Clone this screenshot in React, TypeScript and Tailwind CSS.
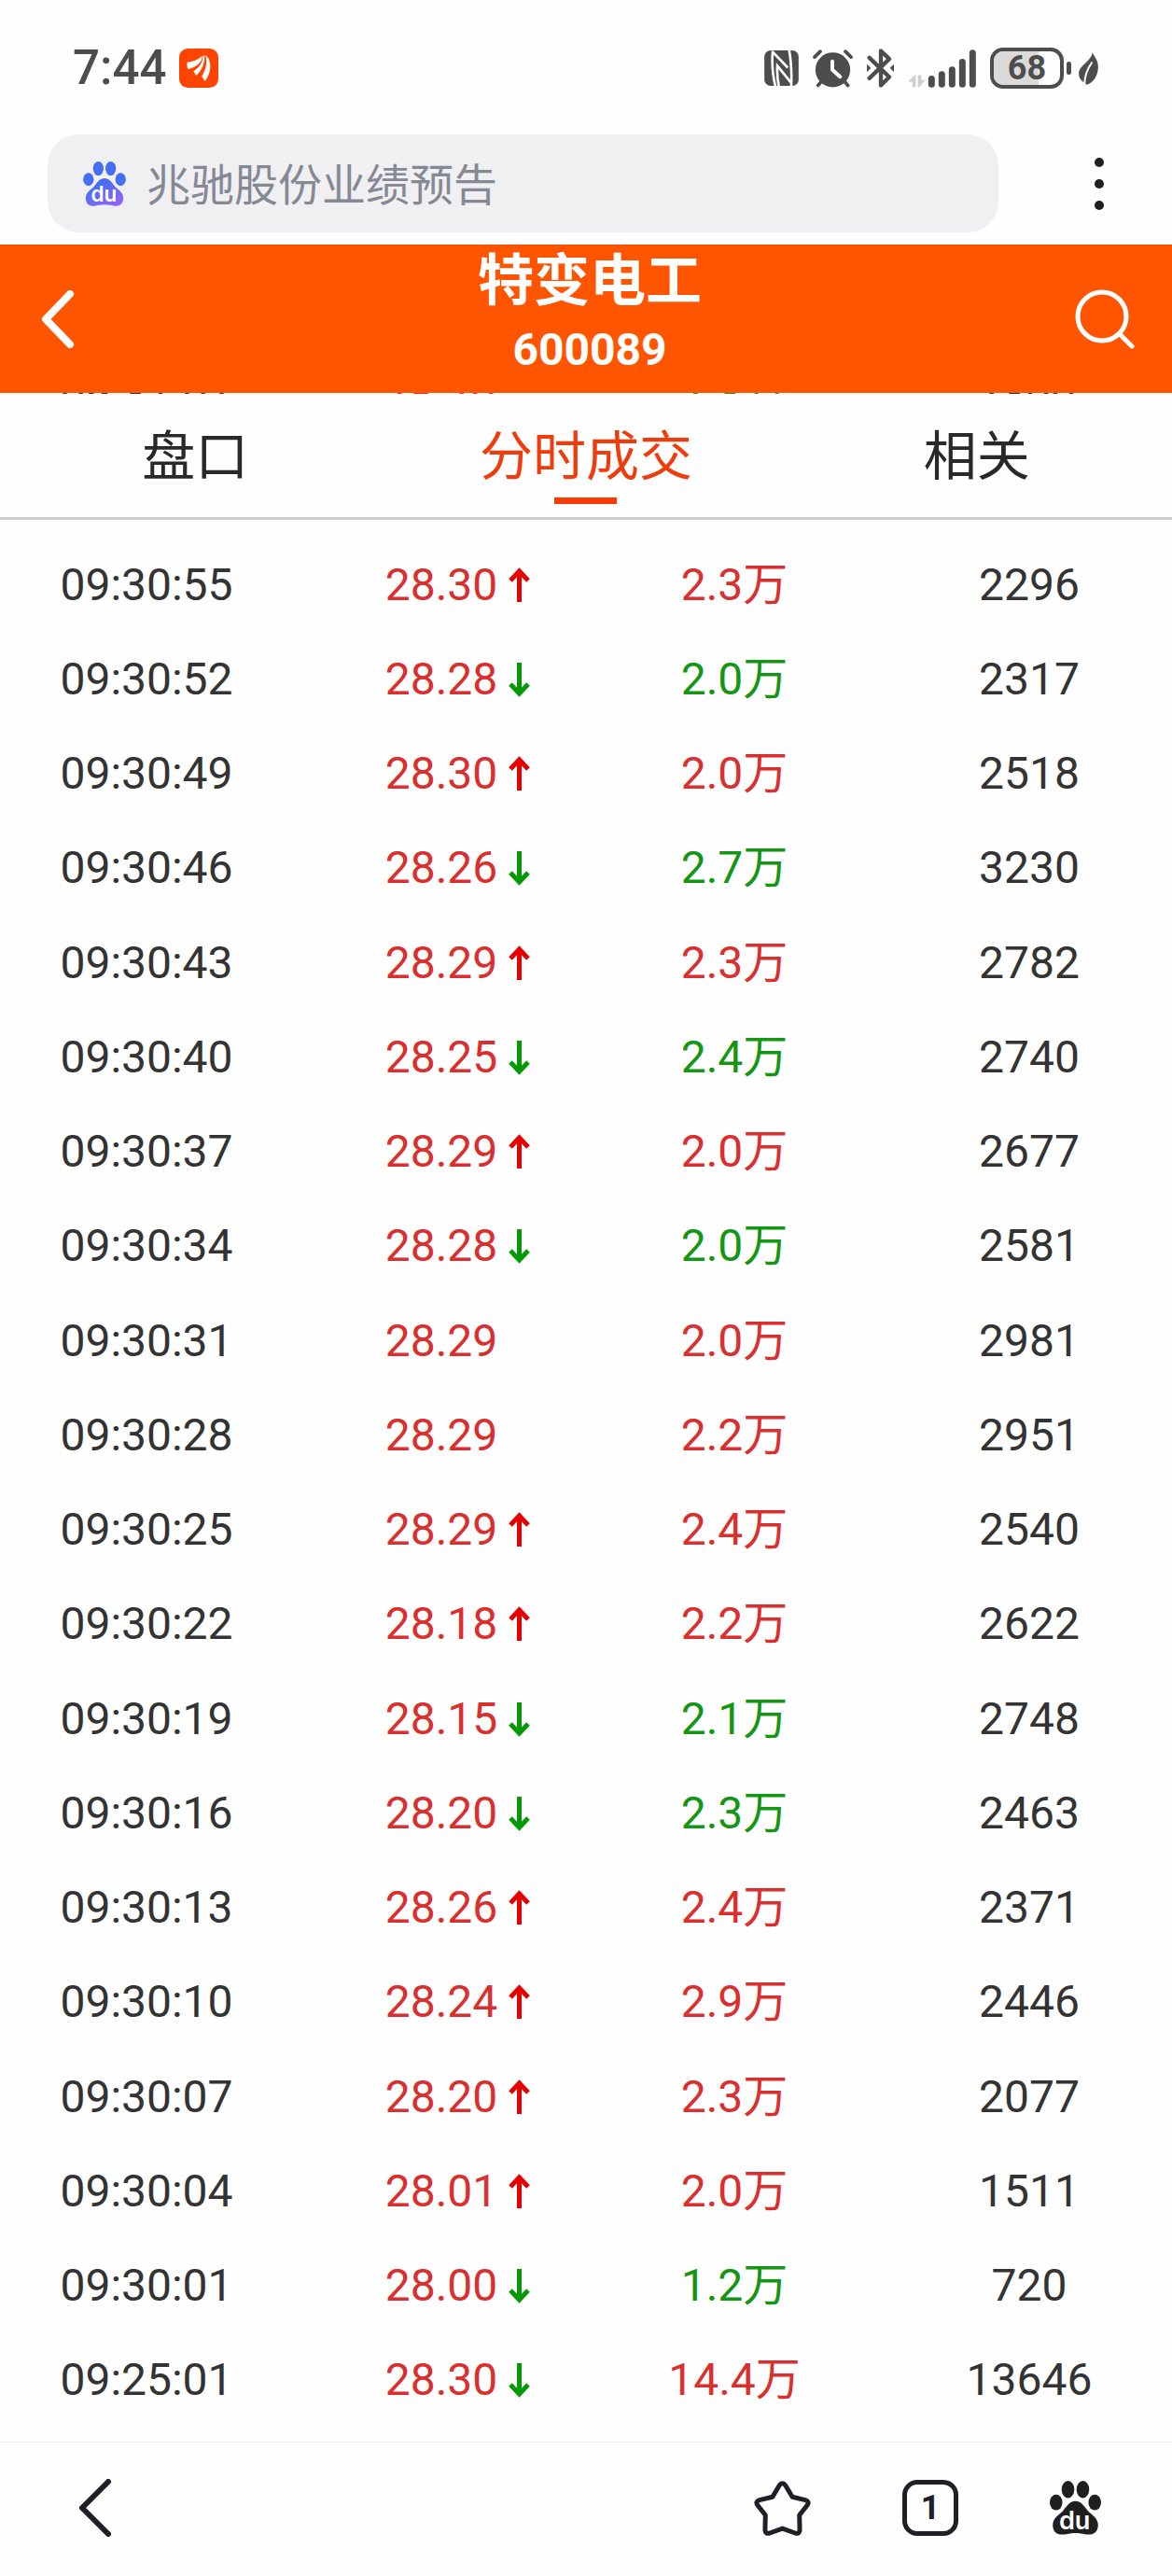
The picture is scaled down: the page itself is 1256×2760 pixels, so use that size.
import { useId, useState } from 'react'
import clsx from 'clsx'

type Trade = {
  time: string
  price: string
  move?: 'up' | 'down'
  volume: string
  side: 'buy' | 'sell'
  count: number
}

const trades: Trade[] = [
  { time: '09:30:55', price: '28.30', move: 'up', volume: '2.3万', side: 'buy', count: 2296 },
  { time: '09:30:52', price: '28.28', move: 'down', volume: '2.0万', side: 'sell', count: 2317 },
  { time: '09:30:49', price: '28.30', move: 'up', volume: '2.0万', side: 'buy', count: 2518 },
  { time: '09:30:46', price: '28.26', move: 'down', volume: '2.7万', side: 'sell', count: 3230 },
  { time: '09:30:43', price: '28.29', move: 'up', volume: '2.3万', side: 'buy', count: 2782 },
  { time: '09:30:40', price: '28.25', move: 'down', volume: '2.4万', side: 'sell', count: 2740 },
  { time: '09:30:37', price: '28.29', move: 'up', volume: '2.0万', side: 'buy', count: 2677 },
  { time: '09:30:34', price: '28.28', move: 'down', volume: '2.0万', side: 'sell', count: 2581 },
  { time: '09:30:31', price: '28.29', volume: '2.0万', side: 'buy', count: 2981 },
  { time: '09:30:28', price: '28.29', volume: '2.2万', side: 'buy', count: 2951 },
  { time: '09:30:25', price: '28.29', move: 'up', volume: '2.4万', side: 'buy', count: 2540 },
  { time: '09:30:22', price: '28.18', move: 'up', volume: '2.2万', side: 'buy', count: 2622 },
  { time: '09:30:19', price: '28.15', move: 'down', volume: '2.1万', side: 'sell', count: 2748 },
  { time: '09:30:16', price: '28.20', move: 'down', volume: '2.3万', side: 'sell', count: 2463 },
  { time: '09:30:13', price: '28.26', move: 'up', volume: '2.4万', side: 'buy', count: 2371 },
  { time: '09:30:10', price: '28.24', move: 'up', volume: '2.9万', side: 'buy', count: 2446 },
  { time: '09:30:07', price: '28.20', move: 'up', volume: '2.3万', side: 'buy', count: 2077 },
  { time: '09:30:04', price: '28.01', move: 'up', volume: '2.0万', side: 'buy', count: 1511 },
  { time: '09:30:01', price: '28.00', move: 'down', volume: '1.2万', side: 'sell', count: 720 },
  { time: '09:25:01', price: '28.30', move: 'down', volume: '14.4万', side: 'buy', count: 13646 },
]

const tabs = ['盘口', '分时成交', '相关']

const numeric = "font-['Roboto','Noto_Sans_CJK_SC',sans-serif]"

function AppBadge() {
  return (
    <svg viewBox="0 0 126 126" className="size-[42px]" aria-hidden="true">
      <rect width="126" height="126" rx="28" fill="#ff4400" />
      <g fill="#fff">
        <path d="M26 44C44 43 60 37 74 24C76 44 52 62 28 66C25 58 25 50 26 44Z" />
        <path d="M77 23L82 22C83 48 72 72 55 87L46 73C62 62 76 48 77 23Z" />
        <path d="M85 21C104 34 107 76 83 105L73 90C86 66 91 46 85 21Z" />
      </g>
    </svg>
  )
}

function NfcIcon() {
  return (
    <svg viewBox="0 0 111 115" className="h-[38px] w-[37px]" aria-hidden="true">
      <rect width="111" height="115" rx="20" fill="#4d4d4d" />
      <g fill="none" stroke="#fff" strokeWidth="8">
        <path d="M27 2Q22 64 36 116" />
        <path d="M26 4L76 56" />
        <path d="M80 -2Q90 50 87 116" />
        <path d="M47 116Q40 84 42 50L86 104" />
      </g>
    </svg>
  )
}

function AlarmIcon() {
  return (
    <svg viewBox="0 0 129 122" className="h-[41px] w-[43px]" fill="none" strokeLinecap="round" strokeLinejoin="round" aria-hidden="true">
      <circle cx="64.500" cy="65" r="56" fill="#4d4d4d" />
      <g stroke="#4d4d4d" strokeWidth="11">
        <path d="M6 24L24 6" />
        <path d="M105 6L123 24" />
        <path d="M17 115L32 98" />
        <path d="M113 115L98 98" />
      </g>
      <path d="M63 38V65L88 87" stroke="#fff" strokeWidth="12" />
    </svg>
  )
}

function BluetoothIcon() {
  return (
    <svg viewBox="0 0 87 125" className="h-[42px] w-[29px]" aria-hidden="true">
      <path d="M8 29L72 91L45 118V7L72 33L8 95" fill="none" stroke="#4d4d4d" strokeWidth="13" strokeLinecap="round" strokeLinejoin="round" />
      <path d="M0 50L13 62L0 75ZM87 50L74 62L87 75Z" fill="#4d4d4d" />
    </svg>
  )
}

function SignalIcon() {
  return (
    <svg viewBox="0 0 219 122" className="h-[41px] w-[73px]" aria-hidden="true">
      <g fill="#cecece">
        <path d="M0 103L22 82H25V120H14V103Z" />
        <path d="M32 82H43V98H55L37 120H32Z" />
      </g>
      <g stroke="#4d4d4d" strokeWidth="21" strokeLinecap="round">
        <path d="M76 94V111" />
        <path d="M109 80V111" />
        <path d="M142 65V111" />
        <path d="M175 40V111" />
        <path d="M208 11V111" />
      </g>
    </svg>
  )
}

function LeafIcon() {
  return (
    <svg viewBox="0 0 61 103" className="h-[35px] w-[21px]" aria-hidden="true">
      <path d="M43 0C46 12 61 22 61 46C61 72 46 97 25 102L13 93C4 86 0 78 0 68C0 40 38 32 43 0Z" fill="#4d4d4d" />
      <path d="M18 104C17 74 26 54 42 31" fill="none" stroke="#fff" strokeWidth="6" />
    </svg>
  )
}

function Battery({ level }: { level: number }) {
  return (
    <div className="flex items-center gap-[3px]">
      <div className="relative h-11 w-[79px] rounded-[14px] border-4 border-[#4d4d4d]">
        <div className="h-full rounded-l-[10px] bg-[#dadada]" style={{ width: `${level}%` }} />
        <span className={clsx('absolute inset-0 text-center text-[36px] leading-[36px] font-bold', numeric)}>{level}</span>
      </div>
      <div className="h-3.5 w-[5px] rounded-full bg-[#4d4d4d]" />
    </div>
  )
}

function PawIcon({ className, gradient }: { className: string; gradient?: boolean }) {
  const id = useId()
  return (
    <svg viewBox="0 0 138 145" className={className} aria-hidden="true">
      <defs>
        <linearGradient id={id} x1="0.2" y1="0" x2="0.8" y2="1">
          <stop offset="0.2" stopColor="#456ff3" />
          <stop offset="1" stopColor="#9463f8" />
        </linearGradient>
      </defs>
      <g fill={gradient ? '#456ff3' : '#1f1f1f'}>
        <ellipse cx="49" cy="23" rx="17" ry="23" />
        <ellipse cx="89" cy="23" rx="17" ry="23" />
        <ellipse cx="17" cy="58" rx="17" ry="21" />
        <ellipse cx="121" cy="58" rx="17" ry="21" />
      </g>
      <path
        d="M69 54C83 54 92 66 102 80C113 92 130 99 130 120C129 138 117 145 104 144C90 143 84 140 69 140C54 140 48 143 35 144C20 145 9 138 8 120C8 99 25 92 36 80C46 66 55 54 69 54Z"
        fill={gradient ? `url(#${id})` : '#1f1f1f'}
      />
      <text x="67" y="131" textAnchor="middle" fontSize="68" fontWeight="600" fontFamily="Inter, sans-serif" fill="#fff">
        du
      </text>
    </svg>
  )
}

function StarIcon() {
  return (
    <svg viewBox="0 0 184 178" className="h-[59px] w-[61px]" fill="none" stroke="#1f2027" strokeWidth="15" strokeLinejoin="round" aria-hidden="true">
      <path d="M82 15Q92 1 102 15L124 52L166 62Q181 67 172 79L147 111L148 159Q147 173 133 169L92 154L51 169Q37 173 36 159L37 111L12 79Q3 67 18 62L60 52Z" />
    </svg>
  )
}

function MoveArrow({ move }: { move: 'up' | 'down' }) {
  return (
    <svg
      viewBox="0 0 23 38"
      className={clsx('absolute top-1/2 left-full ml-3 h-[38px] w-[23px] -translate-y-1/2', move === 'up' ? 'text-[#e60000]' : 'rotate-180 text-[#059a05]')}
      fill="none"
      stroke="currentColor"
      strokeWidth="5"
      role="img"
      aria-label={move === 'up' ? '涨' : '跌'}
    >
      <path d="M11.500 37V4" />
      <path d="M2 14L11.500 4L21 14" />
    </svg>
  )
}

function StatusBar() {
  return (
    <div className="flex h-36 items-center justify-between pt-0.5 pr-[79px] pl-[78px] text-[#4d4d4d]">
      <div className="flex items-center gap-3.5">
        <span className={clsx('text-[51px] leading-[60px] font-medium', numeric)}>7:44</span>
        <AppBadge />
      </div>
      <div className="flex items-center gap-[15px]">
        <NfcIcon />
        <AlarmIcon />
        <BluetoothIcon />
        <SignalIcon />
        <div className="flex items-center gap-2">
          <Battery level={68} />
          <LeafIcon />
        </div>
      </div>
    </div>
  )
}

function AddressBar() {
  return (
    <div className="flex items-center justify-between pr-14 pb-[13px] pl-[51px]">
      <label className="flex h-[105px] w-[1019px] items-center gap-[22px] rounded-[33px] bg-[#f0f0f3] pl-[38px]">
        <PawIcon className="h-12 w-[46px]" gradient />
        <input
          type="text"
          aria-label="搜索"
          placeholder="兆驰股份业绩预告"
          className="min-w-0 flex-1 bg-transparent pb-0.5 text-[47px] outline-none placeholder:text-[#858993]"
        />
      </label>
      <button type="button" aria-label="更多" className="flex w-11 flex-col items-center gap-[13px]">
        <span className="size-2.5 rounded-full bg-[#1f1f1f]" />
        <span className="size-2.5 rounded-full bg-[#1f1f1f]" />
        <span className="size-2.5 rounded-full bg-[#1f1f1f]" />
      </button>
    </div>
  )
}

function StockHeader() {
  return (
    <header className="flex h-[159px] items-center justify-between bg-[#ff5500] px-10 text-white">
      <button type="button" aria-label="返回" className="w-[72px]">
        <svg viewBox="0 0 42 62" className="h-[62px] w-[42px]" fill="none" stroke="currentColor" strokeWidth="8" strokeLinecap="round" strokeLinejoin="round">
          <path d="M35 4L9 31L35 58" />
        </svg>
      </button>
      <h1 className="flex h-full flex-col items-center font-bold">
        <span className="text-[60px] leading-[68px]">特变电工</span>
        <span className={clsx('text-[48px] leading-[90px]', numeric)}>600089</span>
      </h1>
      <button type="button" aria-label="搜索股票">
        <svg viewBox="0 0 64 64" className="size-16" fill="none" stroke="currentColor" strokeWidth="5" strokeLinecap="round">
          <circle cx="29" cy="29" r="26" />
          <path d="M48 48L61 61" />
        </svg>
      </button>
    </header>
  )
}

function TradeTable() {
  return (
    <table className={clsx('h-[2025px] w-full table-fixed text-center text-[48px] leading-[60px] text-[#333]', numeric)}>
      <tbody>
        {trades.map((trade) => (
          <tr key={trade.time}>
            <td>{trade.time}</td>
            <td className="pl-1 text-[#d92f2f]">
              <span className="relative inline-block">
                {trade.price}
                {trade.move && <MoveArrow move={trade.move} />}
              </span>
            </td>
            <td className={clsx('pl-1', trade.side === 'buy' ? 'text-[#d92f2f]' : 'text-[#149614]')}>{trade.volume}</td>
            <td className="pl-2">{trade.count}</td>
          </tr>
        ))}
      </tbody>
    </table>
  )
}

function BottomBar() {
  return (
    <nav className="flex items-center justify-between border-t border-[#ebebeb] bg-[#fdfdfd] pt-[39px] pr-[76px] pb-[42px] pl-20 text-[#1f2027]">
      <button type="button" aria-label="后退">
        <svg viewBox="0 0 42 62" className="h-[62px] w-[42px]" fill="none" stroke="currentColor" strokeWidth="6" strokeLinecap="round" strokeLinejoin="round">
          <path d="M36 3L8 31L36 59" />
        </svg>
      </button>
      <div className="flex items-center gap-[98px]">
        <button type="button" aria-label="收藏">
          <StarIcon />
        </button>
        <button
          type="button"
          aria-label="窗口"
          className={clsx('flex size-[60px] items-center justify-center rounded-2xl border-[5px] border-[#1f2027] text-[36px] leading-[44px] font-bold', numeric)}
        >
          1
        </button>
        <button type="button" aria-label="百度首页">
          <PawIcon className="h-[58px] w-[55px]" />
        </button>
      </div>
    </nav>
  )
}

export default function App() {
  const [active, setActive] = useState('分时成交')

  return (
    <div className="min-h-screen bg-[#fefefe] font-['Noto_Sans_CJK_SC',sans-serif]">
      <StatusBar />
      <AddressBar />
      <StockHeader />

      {/* row scrolled under the header */}
      <div className={clsx('flex h-px items-center overflow-hidden text-center text-[48px] leading-[60px] text-[#333]', numeric)} aria-hidden="true">
        <span className="flex-1">09:31:01</span>
        <span className="flex-1 text-[#d92f2f]">28.20</span>
        <span className="flex-1 text-[#149614]">2.3万</span>
        <span className="flex-1">2300</span>
      </div>

      <div role="tablist" className="grid grid-cols-3 border-b-[3px] border-[#ccc]">
        {tabs.map((tab) => (
          <button
            key={tab}
            type="button"
            role="tab"
            aria-selected={tab === active}
            onClick={() => setActive(tab)}
            className={clsx('flex flex-col items-center pt-5 pb-3.5 text-[57px] leading-[84px]', tab === active ? 'text-[#ef3c0c]' : 'text-[#292929]')}
          >
            {tab}
            <span className={clsx('mt-[7px] h-[7px] w-[67px]', tab === active && 'bg-[#fa3a05]')} />
          </button>
        ))}
      </div>

      <main className="pt-[19px] pb-[15px]">
        <TradeTable />
      </main>
      <BottomBar />
    </div>
  )
}
